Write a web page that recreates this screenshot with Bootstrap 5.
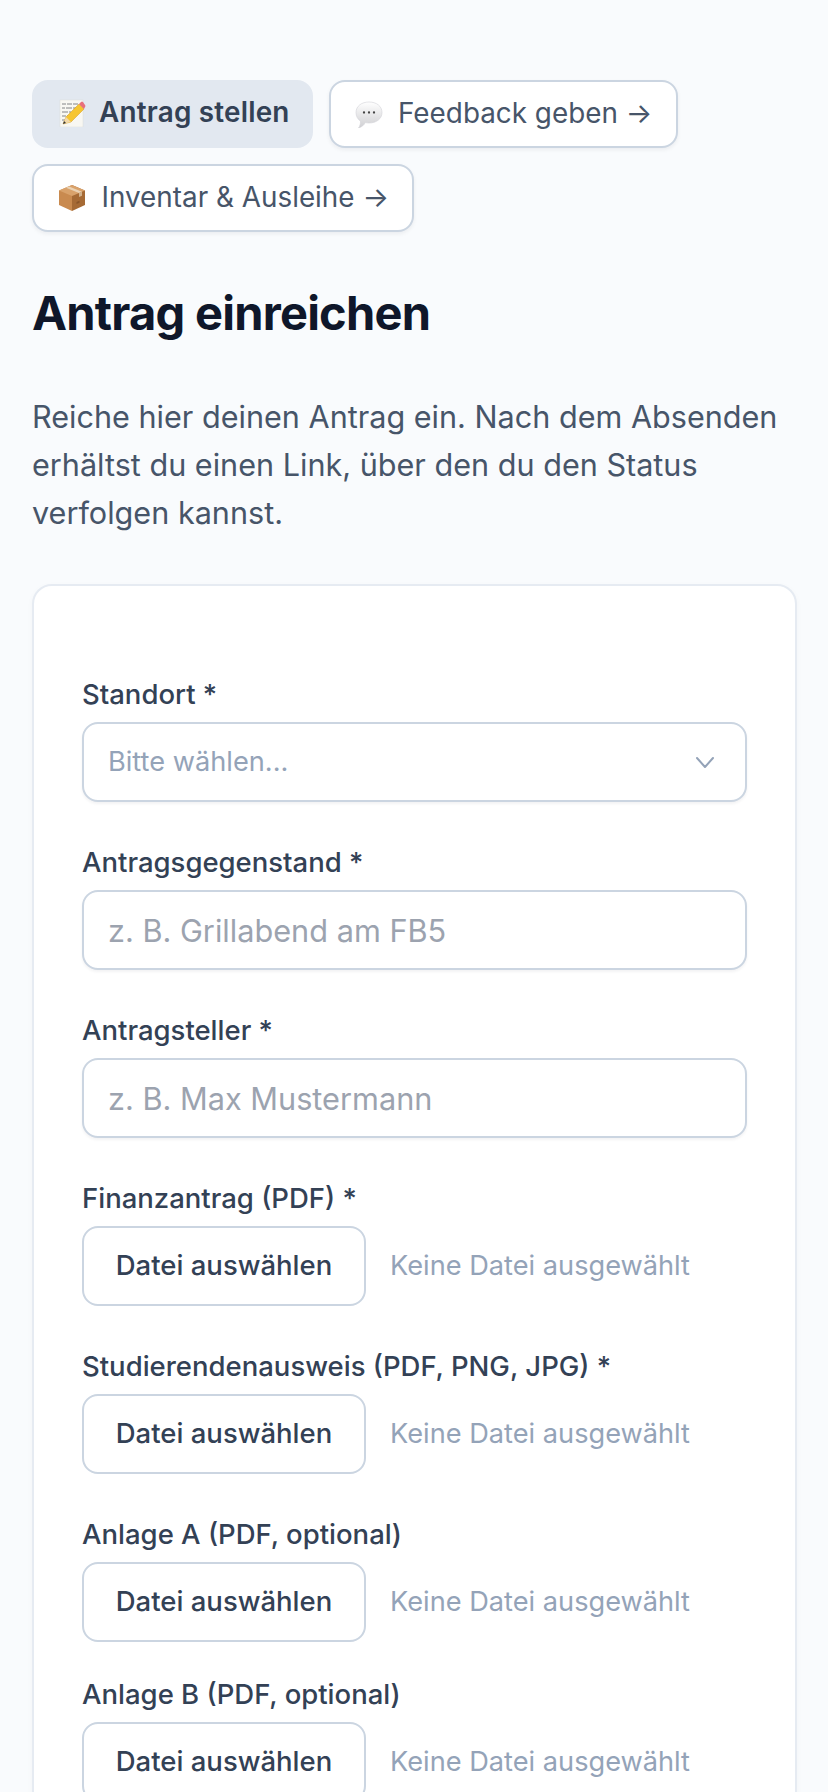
<!DOCTYPE html>
<html lang="de">
<head>
<meta charset="utf-8">
<title>Antrag einreichen</title>
<link href="https://cdn.jsdelivr.net/npm/bootstrap@5.3.0/dist/css/bootstrap.min.css" rel="stylesheet">
<style>
html,body{height:1792px;overflow:hidden}
body{background:#f9fbfd;font-family:Inter,"Liberation Sans",sans-serif;color:#334155;padding:80px 31px 0 32px}
.tab-row{gap:16px;margin-bottom:52px}
.tab-btn{display:inline-flex;align-items:center;height:68px;padding:0 23.5px 0 24px;font-size:27.85px;font-weight:400;color:#475569;background:#fff;border:2px solid #cbd5e1;border-radius:16px;box-shadow:0 2px 4px rgba(15,23,42,.06);text-decoration:none}
.tab-btn svg{width:28px;height:28px;flex:none;margin-right:15.5px}
.tab-btn.tab-on{background:#e2e8f0;border-color:#e2e8f0;color:#334155;font-weight:600;letter-spacing:.2px;box-shadow:none;padding:0 21px 3px 24px}
.tab-btn.tab-on svg{margin-right:13px}
.page-title{font-size:47px;font-weight:700;letter-spacing:-.016em;line-height:57px;color:#0f172a;margin:0 0 52px}
.page-intro{font-size:30.6px;line-height:48px;color:#475569;margin:0 0 47px}
.form-panel{background:#fff;border:2px solid #e6ebf2;border-radius:20px;padding:88px 48px 48px;box-shadow:0 2px 6px rgba(15,23,42,.03);height:1400px}
.fld{margin-bottom:40px}
.fld.fld-tight{margin-bottom:32px}
.fld-label{display:block;font-size:27.5px;font-weight:450;line-height:40px;color:#334155;margin:0 0 8px}
.fld-input.form-control,.fld-input.form-select{height:80px;font-size:30.7px;line-height:40px;padding:0 24px;color:#94a3b8;background-color:#fff;border:2px solid #cbd5e1;border-radius:16px;box-shadow:0 2px 3px rgba(15,23,42,.05)}
.fld-input.form-control::placeholder{color:#9ca3af;opacity:1}
.fld-input.form-select{font-size:27.2px;background-size:24px 24px;background-position:right 28px center;background-image:url("data:image/svg+xml,%3Csvg xmlns='http://www.w3.org/2000/svg' viewBox='0 0 24 24' fill='none' stroke='%2394a3b8' stroke-width='2' stroke-linecap='round' stroke-linejoin='round'%3E%3Cpath d='M4 8l8 9 8-9'/%3E%3C/svg%3E")}
.file-pick{display:inline-flex;align-items:center;justify-content:center;height:80px;width:284px;padding:0;font-size:27.5px;font-weight:500;color:#334155;background:#fff;border:2px solid #cbd5e1;border-radius:16px}
.file-none{font-size:27.2px;color:#94a3b8;margin-left:24px}
</style>
</head>
<body>
<nav class="d-flex flex-wrap tab-row">
<a class="tab-btn tab-on" href="#"><svg viewBox="0 0 28 28"><rect x="2" y="1" width="23" height="27" fill="#f8f7f2" stroke="#dcdcd8" stroke-width=".5"/><g stroke="#77777a" stroke-width=".9"><path d="M4 5h4m1 0h5m1 0h5M4 9h3m1 0h6m1 0h3M4 13h6m1 0h2M4 17h4m1 0h2M4 21h3"/></g><path d="M5 25l3-7L21 5l5 5L13 23z" fill="#f6c531" stroke="#d09a1e" stroke-width=".5"/><path d="M21 5l2-2q1-1 2 0l2 3q1 1 0 2l-1 2z" fill="#e8707c"/><path d="M5 25l3-7 5 5z" fill="#f3d9a8"/><path d="M5 25l1-3 2 2z" fill="#333"/></svg>Antrag stellen</a>
<a class="tab-btn" href="#"><svg viewBox="0 0 28 28"><defs><linearGradient id="bb" x1="0" y1="0" x2="0" y2="1"><stop offset="0" stop-color="#fff"/><stop offset="1" stop-color="#cfcfd2"/></linearGradient></defs><path d="M14 2c7.5 0 13 4.200 13 10.500S21.500 23 14 23c-1.300 0-2.500-.1-3.700-.4C9 25 7 27 3.500 28 5 26 5.500 23.800 5.500 21.200 2.800 19.400 1 16.200 1 12.500 1 6.200 6.500 2 14 2z" fill="url(#bb)" stroke="#d2d2d6" stroke-width=".6"/><circle cx="9" cy="12.500" r="1.150" fill="#444"/><circle cx="14" cy="12.500" r="1.150" fill="#444"/><circle cx="19" cy="12.500" r="1.150" fill="#444"/></svg>Feedback geben →</a>
<a class="tab-btn" href="#"><svg viewBox="0 0 28 28"><path d="M14 1L27 6.500V21L14 27z" fill="#a66a35"/><path d="M14 1L1 6.500V21l13 6z" fill="#c98a4f"/><path d="M14 12L1 6.500 14 1l13 5.500z" fill="#d9a26b"/><path d="M8 3.700l13 5.400 3-1.300L11 2.400z" fill="#ead2b4"/><path d="M21 9.100v4l3-1.300V7.800z" fill="#d2b28c"/><path d="M18.500 20l3-1.300v-2l-3 1.300z" fill="#8a5528"/></svg>Inventar &amp; Ausleihe →</a>
</nav>
<h1 class="page-title">Antrag einreichen</h1>
<p class="page-intro">Reiche hier deinen Antrag ein. Nach dem Absenden erhältst du einen Link, über den du den Status verfolgen kannst.</p>
<form class="form-panel">
<div class="fld"><label class="fld-label" for="f1">Standort *</label><select id="f1" class="form-select fld-input"><option>Bitte wählen...</option></select></div>
<div class="fld"><label class="fld-label" for="f2">Antragsgegenstand *</label><input id="f2" class="form-control fld-input" placeholder="z. B. Grillabend am FB5"></div>
<div class="fld"><label class="fld-label" for="f3">Antragsteller *</label><input id="f3" class="form-control fld-input" placeholder="z. B. Max Mustermann"></div>
<div class="fld"><div class="fld-label">Finanzantrag (PDF) *</div><div class="d-flex align-items-center"><button type="button" class="file-pick">Datei auswählen</button><span class="file-none">Keine Datei ausgewählt</span></div></div>
<div class="fld"><div class="fld-label">Studierendenausweis (PDF, PNG, JPG) *</div><div class="d-flex align-items-center"><button type="button" class="file-pick">Datei auswählen</button><span class="file-none">Keine Datei ausgewählt</span></div></div>
<div class="fld fld-tight"><div class="fld-label">Anlage A (PDF, optional)</div><div class="d-flex align-items-center"><button type="button" class="file-pick">Datei auswählen</button><span class="file-none">Keine Datei ausgewählt</span></div></div>
<div class="fld"><div class="fld-label">Anlage B (PDF, optional)</div><div class="d-flex align-items-center"><button type="button" class="file-pick">Datei auswählen</button><span class="file-none">Keine Datei ausgewählt</span></div></div>
</form>
<script src="https://cdn.jsdelivr.net/npm/bootstrap@5.3.0/dist/js/bootstrap.bundle.min.js"></script>
</body>
</html>
